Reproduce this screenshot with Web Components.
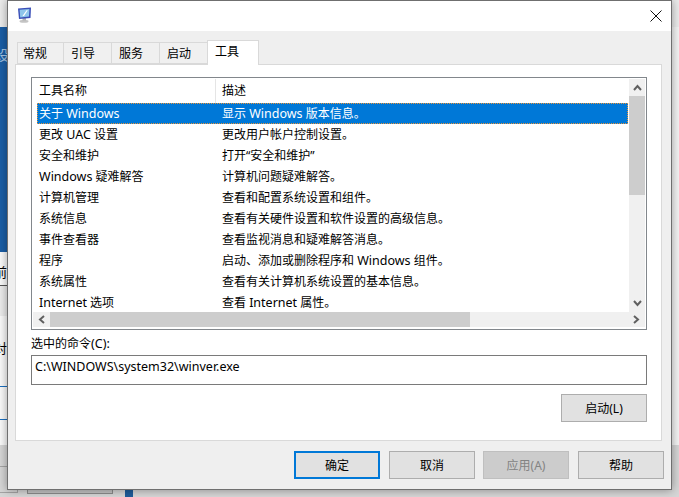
<!DOCTYPE html>
<html>
<head>
<meta charset="utf-8">
<style>
  html,body{margin:0;padding:0;height:100%;overflow:hidden;}
  body{width:679px;height:497px;position:relative;font-family:"Noto Sans","Noto Sans CJK SC",sans-serif;font-size:12px;color:#000;}
  .l{font-size:12.5px;}
</style>
</head>
<body>

<desktop-back></desktop-back>

<tool-dialog>
  <tab-item slot="tabs">常规</tab-item>
  <tab-item slot="tabs">引导</tab-item>
  <tab-item slot="tabs">服务</tab-item>
  <tab-item slot="tabs">启动</tab-item>
  <tab-item slot="tabs" active>工具</tab-item>

  <tool-list>
    <tool-row selected><span slot="name">关于 <span class="l">Windows</span></span>显示 <span class="l">Windows</span> 版本信息。</tool-row>
    <tool-row><span slot="name">更改 <span class="l">UAC</span> 设置</span>更改用户帐户控制设置。</tool-row>
    <tool-row><span slot="name">安全和维护</span>打开“安全和维护”</tool-row>
    <tool-row><span slot="name"><span class="l">Windows</span> 疑难解答</span>计算机问题疑难解答。</tool-row>
    <tool-row><span slot="name">计算机管理</span>查看和配置系统设置和组件。</tool-row>
    <tool-row><span slot="name">系统信息</span>查看有关硬件设置和软件设置的高级信息。</tool-row>
    <tool-row><span slot="name">事件查看器</span>查看监视消息和疑难解答消息。</tool-row>
    <tool-row><span slot="name">程序</span>启动、添加或删除程序和 <span class="l">Windows</span> 组件。</tool-row>
    <tool-row><span slot="name">系统属性</span>查看有关计算机系统设置的基本信息。</tool-row>
    <tool-row><span slot="name"><span class="l">Internet</span> 选项</span>查看 <span class="l">Internet</span> 属性。</tool-row>
  </tool-list>

  <command-box label="选中的命令(C):" value="C:\WINDOWS\system32\winver.exe"></command-box>
  <dlg-button slot="run">启动(L)</dlg-button>

  <dlg-button slot="footer" primary>确定</dlg-button>
  <dlg-button slot="footer" style="margin-right:-1px">取消</dlg-button>
  <dlg-button slot="footer" disabled>应用(A)</dlg-button>
  <dlg-button slot="footer">帮助</dlg-button>
</tool-dialog>

<script>
class desktopBack extends HTMLElement {
  constructor() {
    super();
    let shadowRoot = this.attachShadow({mode: 'open'});
    shadowRoot.innerHTML = `
    <style>
      :host{display:block;position:absolute;left:0;top:0;width:679px;height:497px;background:#f0f0f0;overflow:hidden;}
      div{position:absolute;}
      .top{left:0;top:0;width:679px;height:27px;background:#ececec;}
      .blue{left:0;top:27px;width:7px;height:225px;background:#1a5ea6;}
      .she{left:-5px;top:46px;color:#a9c6e4;font-size:14px;line-height:18px;}
      .pale{left:0;top:252px;width:7px;height:33px;background:#fafafa;}
      .qian{left:-6px;top:263px;font-size:13px;line-height:18px;}
      .l1{left:0;top:285px;width:7px;height:1px;background:#555;}
      .grey{left:0;top:286px;width:7px;height:30px;background:#ececec;}
      .pale2{left:0;top:316px;width:7px;height:129px;background:#fafafa;}
      .dui{left:-6px;top:339px;font-size:13px;line-height:18px;}
      .b1{left:0;top:419px;width:7px;height:1px;background:#1a6fc0;}
      .b2{left:0;top:386px;width:7px;height:1px;background:#1a6fc0;}
      .low{left:0;top:445px;width:679px;height:52px;background:#d6d6d6;}
      .l3{left:0;top:466px;width:18px;height:27px;box-sizing:border-box;border:1px solid #a5a5a5;border-left:0;}
      .bn{left:27px;top:480px;width:86px;height:14px;box-sizing:border-box;border:1px solid #8c8c8c;background:#c4c4c4;}
      .blk{left:125px;top:489px;width:8px;height:8px;background:#1e5c9a;}
      .right{left:672px;top:27px;width:7px;height:418px;background:#f4f4f4;}
    </style>
    <div class="top"></div>
    <div class="blue"></div><div class="she">设</div>
    <div class="pale"></div><div class="qian">前</div>
    <div class="l1"></div><div class="grey"></div>
    <div class="pale2"></div><div class="dui">对</div>
    <div class="b2"></div><div class="b1"></div>
    <div class="low"></div><div class="l3"></div><div class="bn"></div><div class="blk"></div>
    <div class="right"></div>`;
  }
}

class toolDialog extends HTMLElement {
  constructor() {
    super();
    let shadowRoot = this.attachShadow({mode: 'open'});
    shadowRoot.innerHTML = `
    <style>
      :host{
        position:absolute;left:7px;top:0;width:665px;height:490px;box-sizing:border-box;
        display:flex;flex-direction:column;
        background:#efefef;border:1px solid #6f6f6f;
        box-shadow:0 0 9px rgba(0,0,0,.38);
      }
      .title{height:30px;background:#fff;flex:none;display:flex;align-items:center;justify-content:space-between;padding:0 9px 0 9px;}
      .icon{width:15px;height:16px;display:block;margin-top:-2px;}
      .close{width:12px;height:12px;display:block;margin-top:-1px;}
      .body{flex:1;display:flex;flex-direction:column;padding:9px 9px 0 7px;}
      .tabs{display:flex;align-items:flex-end;height:25px;padding-left:2px;position:relative;z-index:1;margin-bottom:-1px;}
      .panel{height:377px;box-sizing:border-box;background:#fff;border:1px solid #d9d9d9;padding:12px 14px 0 15px;display:flex;flex-direction:column;}
      .run{display:flex;justify-content:flex-end;margin-top:9px;}
      .footer{display:flex;justify-content:flex-end;gap:9px;margin:10px -2px 0 0;}
    </style>
    <div class="title">
      <svg class="icon" viewBox="0 0 15 16">
        <ellipse cx="7" cy="14.2" rx="4.5" ry="1.5" fill="#c4c4c4"/>
        <rect x="5.5" y="11" width="3.5" height="2.5" fill="#b4b4b4"/>
        <path d="M1 1.5 14 .5 13.5 11 2 12Z" fill="#3b4fb8"/>
        <path d="M2.6 2.8 12.4 2 12 9.6 3.2 10.4Z" fill="#8fc6ea"/>
        <path d="M5.5 9 9.5 3.2 10.8 3.2 7 9Z" fill="#fff"/>
      </svg>
      <svg class="close" viewBox="0 0 12 12"><path d="M.5.5 11.5 11.5M11.5.5 .5 11.5" stroke="#111" stroke-width="1" fill="none"/></svg>
    </div>
    <div class="body">
      <div class="tabs"><slot name="tabs"></slot></div>
      <div class="panel">
        <slot></slot>
        <div class="run"><slot name="run"></slot></div>
      </div>
      <div class="footer"><slot name="footer"></slot></div>
    </div>`;
  }
}

class tabItem extends HTMLElement {
  constructor() {
    super();
    let shadowRoot = this.attachShadow({mode: 'open'});
    shadowRoot.innerHTML = `
    <style>
      :host{display:block;box-sizing:border-box;width:48px;height:22px;background:#f0f0f0;border:1px solid #d9d9d9;border-left:0;padding-left:7px;font-size:12px;line-height:21px;margin-bottom:1px;}
      :host(:first-child){border-left:1px solid #d9d9d9;width:47px;padding-left:5px;}
      :host([active]){width:52px;height:25px;background:#fff;border:1px solid #d9d9d9;border-bottom:0;margin:0 0 0 -1px;padding-left:7px;line-height:22px;position:relative;}
    </style>
    <slot></slot>`;
  }
}

class toolList extends HTMLElement {
  constructor() {
    super();
    let shadowRoot = this.attachShadow({mode: 'open'});
    shadowRoot.innerHTML = `
    <style>
      :host{display:block;box-sizing:border-box;width:616px;height:253px;border:1px solid #82878c;padding:1px;background:#fff;}
      .grid{display:grid;grid-template-columns:596px 16px;grid-template-rows:233px 15px;height:248px;}
      .main{overflow:hidden;display:flex;flex-direction:column;padding-left:4px;}
      .head{flex:none;height:24px;display:grid;grid-template-columns:178px 1fr;line-height:23px;}
      .head span{padding-left:2px;}
      .head span + span{border-left:1px solid #e5e5e5;padding-left:6px;}
      .h{grid-column:1 / 3;}
    </style>
    <div class="grid">
      <div class="main">
        <div class="head"><span>工具名称</span><span>描述</span></div>
        <slot></slot>
      </div>
      <scroll-bar vertical></scroll-bar>
      <scroll-bar class="h"></scroll-bar>
    </div>`;
  }
}

class toolRow extends HTMLElement {
  constructor() {
    super();
    let shadowRoot = this.attachShadow({mode: 'open'});
    shadowRoot.innerHTML = `
    <style>
      :host{display:grid;flex:none;grid-template-columns:183px 1fr;box-sizing:border-box;width:591px;height:21px;line-height:22px;padding-left:2px;white-space:nowrap;}
      :host([selected]){background:#0078d7;color:#fff;outline:1px dotted #e8943a;outline-offset:-1px;}
    </style>
    <div><slot name="name"></slot></div><div><slot></slot></div>`;
  }
}

class scrollBar extends HTMLElement {
  constructor() {
    super();
    let shadowRoot = this.attachShadow({mode: 'open'});
    const v = this.hasAttribute('vertical');
    const arrow = d => `<svg width="9" height="7" viewBox="0 0 9 7"><path d="${d}" fill="none" stroke="#606060" stroke-width="2"/></svg>`;
    const arrowH = d => `<svg width="7" height="9" viewBox="0 0 7 9"><path d="${d}" fill="none" stroke="#606060" stroke-width="2"/></svg>`;
    shadowRoot.innerHTML = `
    <style>
      :host{display:flex;background:#f0f0f0;flex-direction:${v ? 'column' : 'row'};}
      .btn{flex:none;display:flex;align-items:center;justify-content:center;${v ? 'height:17px' : 'width:17px'};}
      .thumb{flex:none;background:#cdcdcd;${v ? 'height:99px' : 'width:420px'};}
      .track{flex:1;}
    </style>
    <div class="btn">${v ? arrow('M1 6 4.5 2 8 6') : arrowH('M6 1 2 4.5 6 8')}</div>
    <div class="thumb"></div>
    <div class="track"></div>
    <div class="btn">${v ? arrow('M1 1 4.5 5 8 1') : arrowH('M1 1 5 4.5 1 8')}</div>`;
  }
}

class commandBox extends HTMLElement {
  constructor() {
    super();
    let shadowRoot = this.attachShadow({mode: 'open'});
    shadowRoot.innerHTML = `
    <style>
      :host{display:block;width:616px;}
      label{display:block;height:25px;line-height:27px;}
      .l{font-size:12.5px;}
      .field{box-sizing:border-box;height:30px;border:1px solid #7a7a7a;background:#fff;padding-left:3px;line-height:22px;font-size:12.5px;}
    </style>
    <label>选中的命令<span class="l">(C):</span></label>
    <div class="field">${this.getAttribute('value')}</div>`;
  }
}

class dlgButton extends HTMLElement {
  constructor() {
    super();
    let shadowRoot = this.attachShadow({mode: 'open'});
    shadowRoot.innerHTML = `
    <style>
      :host{display:flex;align-items:center;justify-content:center;box-sizing:border-box;width:86px;height:28px;background:#e1e1e1;border:1px solid #adadad;font-size:12px;}
      :host([primary]){border:2px solid #0078d7;}
      :host([disabled]){background:#cccccc;border-color:#bfbfbf;color:#838383;}
    </style>
    <slot></slot>`;
  }
}

customElements.define('desktop-back', desktopBack);
customElements.define('tab-item', tabItem);
customElements.define('scroll-bar', scrollBar);
customElements.define('tool-row', toolRow);
customElements.define('tool-list', toolList);
customElements.define('command-box', commandBox);
customElements.define('dlg-button', dlgButton);
customElements.define('tool-dialog', toolDialog);
</script>
</body>
</html>
